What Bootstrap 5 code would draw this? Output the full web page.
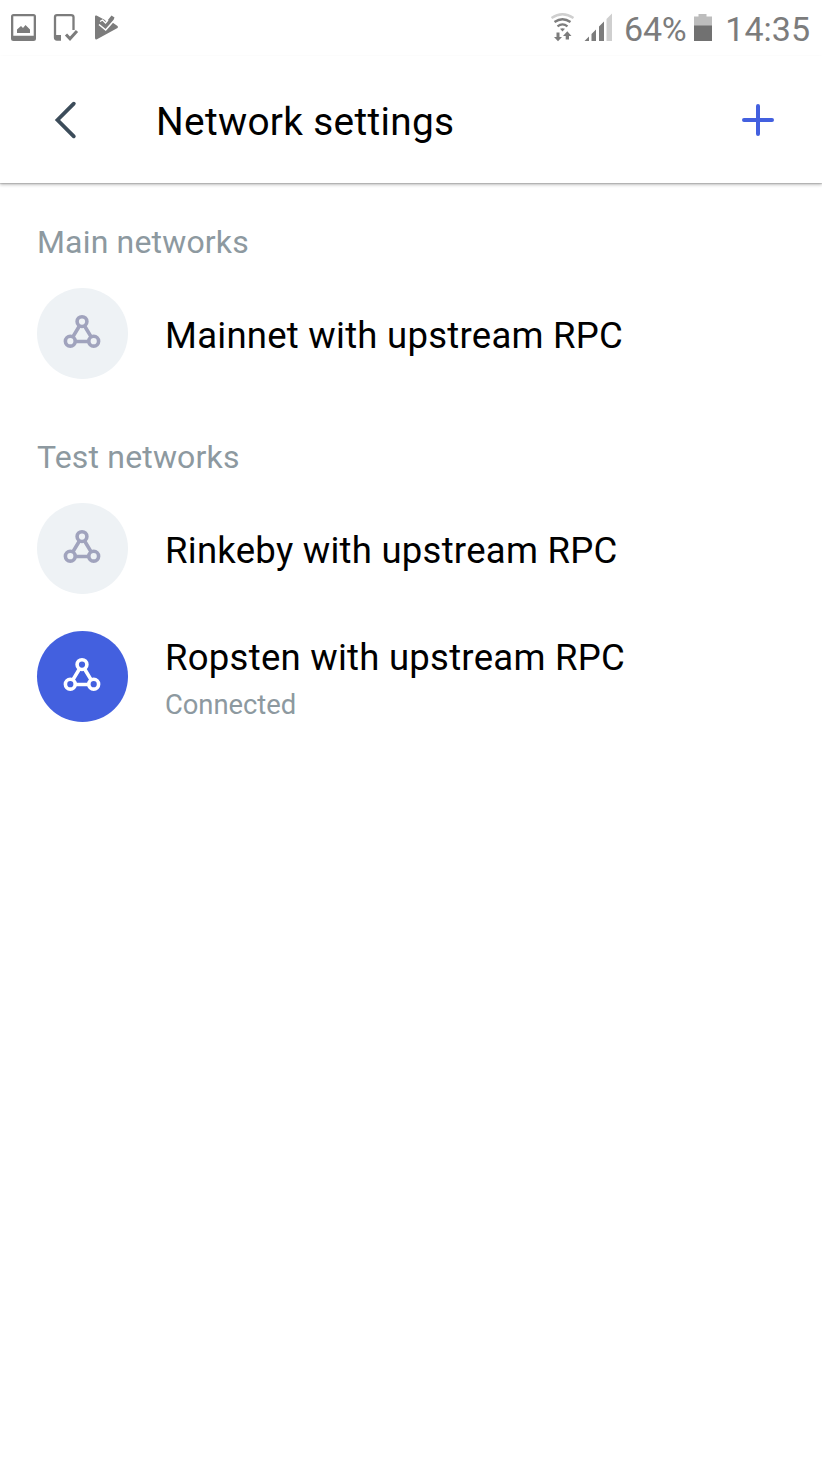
<!DOCTYPE html>
<html lang="en">
<head>
<meta charset="utf-8">
<meta name="viewport" content="width=device-width, initial-scale=1">
<title>Network settings</title>
<link href="https://cdn.jsdelivr.net/npm/bootstrap@5.3.0/dist/css/bootstrap.min.css" rel="stylesheet">
<style>
body{font-family:Roboto,"Liberation Sans",sans-serif;background:#fff;color:#000;min-height:100vh}
svg{display:block;flex:none}
.status-bar{height:56px;color:#7c7c7c;padding:0 12px 0 10px}
.status-text{font-size:34px;line-height:40px;white-space:nowrap;padding-top:1px}
.pct{margin-left:10px;letter-spacing:-.3px}
.clock{margin-left:12px}
.battery{margin-left:7px}
.app-header{height:127px;box-shadow:0 2px 3px rgba(0,0,0,.22),0 1px 1px rgba(0,0,0,.14);padding:0 47px 0 53px}
.app-title{font-size:38.8px;line-height:44px;letter-spacing:.32px;margin:5px 0 0 79px;font-weight:400}
.section-label{font-size:32px;line-height:40px;letter-spacing:.17px;color:#8d99a0;margin:0 0 26px;font-weight:400}
.net-section{padding:39px 37px 0}
.net-section+.net-section{padding-top:58px}
.net-icon{width:91px;height:91px;background:#eef2f5;color:#a0a3bd;flex:none}
.net-icon svg{margin:-3px 0 0 -1px}
.net-icon.on{background:#4360df;color:#fff}
.net-row{gap:37px}
.net-row+.net-row{margin-top:37px}
.net-name{font-size:36.5px;line-height:44px;letter-spacing:.26px;white-space:nowrap}
.net-state{font-size:27.4px;line-height:36px;color:#8d99a0;margin:7px 0 -1px;letter-spacing:-.05px}
</style>
</head>
<body>
<svg width="0" height="0" class="position-absolute"><defs>
<symbol id="net" viewBox="0 0 38 36"><g fill="none" stroke="currentColor" stroke-width="3.6"><circle cx="19" cy="7.6" r="4.9"/><circle cx="7.3" cy="27.2" r="4.9"/><circle cx="30.7" cy="27.2" r="4.9"/><path d="M16.400 12L10 22.600M21.600 12L28 22.600M12.200 27.500H25.800"/></g></symbol>
</defs></svg>
<header>
<div class="status-bar d-flex align-items-center justify-content-between">
 <div class="d-flex align-items-center">
  <svg width="110" height="30" viewBox="10 13 110 30" fill="#7c7c7c"><path fill-rule="evenodd" d="M13.500 14H33.500Q36 14 36 16.500V38.500Q36 41 33.500 41H13.500Q11 41 11 38.500V16.500Q11 14 13.500 14ZM13.300 16.300V35.700H33.700V16.300Z"/><path d="M17 33V29.500L21 26L23 28L25.500 25L30 29.500V33Z"/><path d="M61 39.500H57Q55 39.500 55 37.500V17Q55 15.200 57 15.200H71Q73.500 15.200 73.500 17V30" fill="none" stroke="#7c7c7c" stroke-width="2.300"/><path d="M55 35H61V40H55Z"/><path d="M66 34.500L70 38.800L77 31" fill="none" stroke="#7c7c7c" stroke-width="3"/><path d="M95 16.500Q95 15 96.500 15.500L104.500 19.700L106.500 21.700L111.500 15.500L114.500 17.500L112.500 22.500L117.500 26Q118.500 27 117.500 28L96.500 39.500Q95 39.500 95 38Z"/><path d="M99 24.500L105.700 30L114 20.500" fill="none" stroke="#fff" stroke-width="1.600"/><path d="M100 21.500L102.500 20L105.500 23L108 20" fill="none" stroke="#fff" stroke-width="1.300"/></svg>
 </div>
 <div class="d-flex align-items-center">
  <svg width="64" height="30" viewBox="550 13 64 30"><g fill="none" stroke="#7c7c7c" stroke-width="2.300"><path d="M551.500 18Q562.500 10.500 573.500 18" stroke="#cfcfcf"/><path d="M554.500 22Q562.500 16.500 570.500 22"/><path d="M557.500 26.300Q562.500 22.500 567.500 26.300"/></g><g fill="#7c7c7c"><path d="M560 28.800Q562.500 27.500 565 28.800L562.500 31.500ZM556.500 32.500H559.500V37H562L558 41.300L554 37H556.500ZM565.700 39.500V36H563L567.300 31.300L571.500 36H569V39.500Z"/><path d="M584.500 41L589 36.500V41ZM591.500 41V34L596 29.500V41ZM599 41V26.500L604 21.500V41Z"/><path d="M606.500 41V19L612 13.500V41Z" fill="#cfcfcf"/></g></svg>
  <span class="status-text pct">64%</span>
  <svg class="battery" width="20" height="30" viewBox="693.500 13 20 30"><path d="M694.500 16.500H699V14H707V16.500H712.500V26H694.500Z" fill="#bdbdbd"/><path d="M694.500 25.500H712.500V41H694.500Z" fill="#717171"/></svg>
  <span class="status-text clock">14:35</span>
 </div>
</div>
<nav class="app-header d-flex align-items-center">
 <svg width="24" height="38" viewBox="0 0 24 38" fill="none" stroke="#3c4c5a" stroke-width="3.800" stroke-linecap="round" stroke-linejoin="miter"><path d="M20.800 2.700L4.500 19L20.800 35.300"/></svg>
 <h1 class="app-title">Network settings</h1>
 <svg class="ms-auto" width="34" height="34" viewBox="0 0 34 34" stroke="#4360df" stroke-width="4" stroke-linecap="round"><path d="M3 17H31M17 3V31"/></svg>
</nav>
</header>
<main>
<section class="net-section">
 <h2 class="section-label">Main networks</h2>
 <div class="net-row d-flex align-items-center"><div class="net-icon rounded-circle d-flex align-items-center justify-content-center"><svg width="38" height="36"><use href="#net"/></svg></div><div class="net-name pt-1">Mainnet with upstream RPC</div></div>
</section>
<section class="net-section">
 <h2 class="section-label">Test networks</h2>
 <div class="net-row d-flex align-items-center"><div class="net-icon rounded-circle d-flex align-items-center justify-content-center"><svg width="38" height="36"><use href="#net"/></svg></div><div class="net-name pt-1">Rinkeby with upstream RPC</div></div>
 <div class="net-row d-flex align-items-center"><div class="net-icon on rounded-circle d-flex align-items-center justify-content-center"><svg width="38" height="36"><use href="#net"/></svg></div><div class="pt-1"><div class="net-name">Ropsten with upstream RPC</div><div class="net-state">Connected</div></div></div>
</section>
</main>
<script src="https://cdn.jsdelivr.net/npm/bootstrap@5.3.0/dist/js/bootstrap.bundle.min.js"></script>
</body>
</html>
